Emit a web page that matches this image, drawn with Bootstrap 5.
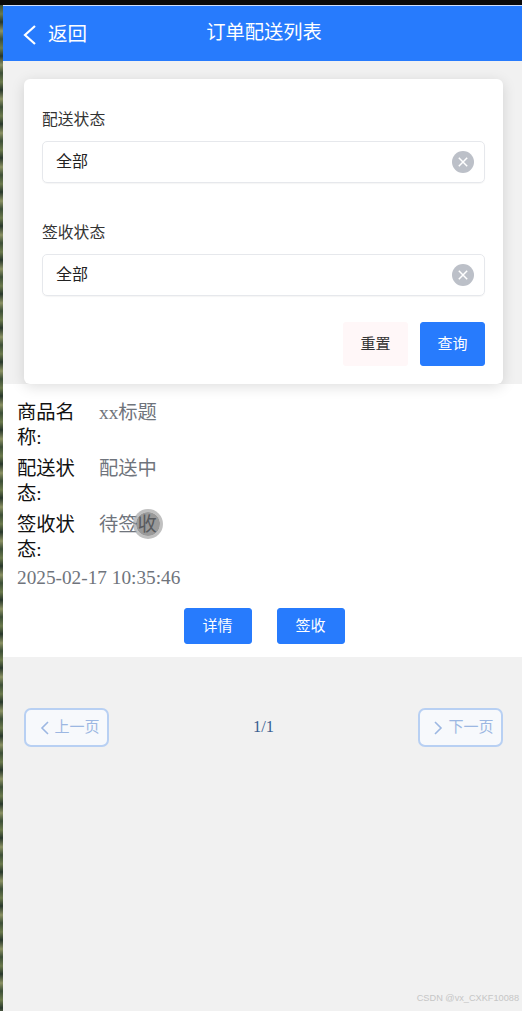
<!DOCTYPE html>
<html lang="zh-CN">
<head>
    <meta charset="UTF-8">
    <meta name="viewport" content="width=device-width, initial-scale=1.0">
    <title>订单配送列表</title>
    <link href="https://cdn.jsdelivr.net/npm/bootstrap@5.3.0/dist/css/bootstrap.min.css" rel="stylesheet">
    <style>
        html, body { height: 100%; }
        body {
            background: #f1f1f1;
            font-family: "Liberation Sans", "Noto Sans CJK SC", sans-serif;
            overflow: hidden;
        }
        .shot-frame { height: 1011px; border-top: 5px solid #0a0a0a; }
        .photo-edge {
            width: 3px;
            background: repeating-linear-gradient(180deg, #3c4f38 0, #6b7a4c 9px, #28382c 17px, #8a9163 26px, #3c4f38 34px);
        }
        .page-main { min-width: 0; background: #f1f1f1; }
        .top-bar {
            height: 56px;
            background: #277bfd;
            border-top: 1px solid #cfe0fb;
            color: #fff;
        }
        .back-link { width: 84px; padding-left: 20px; font-size: 19.5px; gap: 12px; margin-top: 3px; flex: none; }
        .bar-title { width: 186px; margin-left: 84px; font-size: 19.3px; text-align: center; flex: none; }
        .filter-box {
            margin: 18px 19px 0 21px;
            height: 305px;
            padding: 30px 18px 0 18px;
            background: #fff;
            border-radius: 6px;
            box-shadow: 0 3px 14px rgba(0, 0, 0, .13);
            position: relative;
            z-index: 2;
        }
        .field-label { font-size: 15.8px; line-height: 22px; color: #333; margin-bottom: 10px; }
        .select-box {
            height: 42px;
            border: 1px solid #e6e8ec;
            border-radius: 5px;
            padding: 0 10px 0 13px;
            font-size: 16px;
            color: #222;
            margin-bottom: 39px;
            box-shadow: 0 1px 1px rgba(0, 0, 0, .04);
        }
        .select-box.last-select { margin-bottom: 26px; }
        .clear-dot { width: 22px; height: 22px; display: block; }
        .btn-plain, .btn-blue {
            width: 65px;
            height: 44px;
            padding: 0;
            font-size: 15px;
            border-radius: 3px;
        }
        .btn-plain { background: #fff7f8; border: 0; color: #333; }
        .btn-blue { background: #277bfd; border: 1px solid #277bfd; color: #fff; }
        .btn-blue:hover { background: #277bfd; color: #fff; }
        .order-box {
            background: #fff;
            height: 273px;
            padding: 16px 14px 0 14px;
            font-family: "Liberation Serif", "Noto Sans CJK SC", serif;
            font-size: 19.3px;
            line-height: 25px;
        }
        .order-line { margin-bottom: 6px; }
        .order-key { width: 64px; margin-right: 18px; color: #111; flex: none; }
        .order-val { color: #6f747c; position: relative; }
        .order-date { color: #6f747c; margin-top: -3px; }
        .order-btns { gap: 25px; margin-top: 18px; padding-left: 3px; }
        .order-btns .btn-blue { width: 68px; height: 36px; font-size: 15px; font-family: "Liberation Sans", "Noto Sans CJK SC", sans-serif; }
        .touch-dot {
            position: absolute;
            left: 34px;
            top: -3px;
            width: 30px;
            height: 30px;
            border-radius: 50%;
            background: rgba(70, 70, 70, .55);
            background-clip: padding-box;
            border: 3px solid rgba(150, 150, 150, .6);
        }
        .pager { padding: 51px 19px 0 21px; }
        .pager-btn {
            width: 85px;
            height: 39px;
            padding-left: 6px;
            border: 2px solid #b8d0f3;
            border-radius: 7px;
            background: #f7f9fc;
            color: #9cb7e2;
            font-size: 15px;
            gap: 4px;
        }
        .pager-num { font-family: "Liberation Serif", serif; font-size: 16.5px; color: #3a5f92; }
        .mark-text {
            position: absolute;
            right: 3px;
            bottom: 5px;
            font-size: 9.2px;
            color: #c6c6c6;
        }
    </style>
</head>
<body>
    <div class="shot-frame d-flex position-relative">
        <div class="photo-edge flex-shrink-0"></div>
        <div class="page-main flex-grow-1">
            <!-- Header -->
            <div class="top-bar d-flex align-items-center">
                <div class="back-link d-flex align-items-center">
                    <svg width="13" height="20" viewBox="0 0 13 20"><path d="M12 1 2 10l10 9" fill="none" stroke="#fff" stroke-width="2.200"/></svg>
                    <span>返回</span>
                </div>
                <div class="bar-title">订单配送列表</div>
            </div>

            <!-- Filter -->
            <div class="filter-box">
                <div class="field-label">配送状态</div>
                <div class="select-box d-flex align-items-center justify-content-between">
                    <span>全部</span>
                    <svg class="clear-dot" viewBox="0 0 22 22"><circle cx="11" cy="11" r="11" fill="#bcc0c8"/><path d="M6.800 6.800l8.400 8.400M15.200 6.800l-8.400 8.400" stroke="#fff" stroke-width="1.500"/></svg>
                </div>
                <div class="field-label">签收状态</div>
                <div class="select-box last-select d-flex align-items-center justify-content-between">
                    <span>全部</span>
                    <svg class="clear-dot" viewBox="0 0 22 22"><circle cx="11" cy="11" r="11" fill="#bcc0c8"/><path d="M6.800 6.800l8.400 8.400M15.200 6.800l-8.400 8.400" stroke="#fff" stroke-width="1.500"/></svg>
                </div>
                <div class="d-flex justify-content-end gap-2">
                    <button class="btn btn-plain me-1">重置</button>
                    <button class="btn btn-blue">查询</button>
                </div>
            </div>

            <!-- Order -->
            <div class="order-box">
                <div class="order-line d-flex"><div class="order-key">商品名称:</div><div class="order-val">xx标题</div></div>
                <div class="order-line d-flex"><div class="order-key">配送状态:</div><div class="order-val">配送中</div></div>
                <div class="order-line d-flex"><div class="order-key">签收状态:</div><div class="order-val">待签收<span class="touch-dot"></span></div></div>
                <div class="order-date">2025-02-17 10:35:46</div>
                <div class="order-btns d-flex justify-content-center">
                    <button class="btn btn-blue">详情</button>
                    <button class="btn btn-blue">签收</button>
                </div>
            </div>

            <!-- Pager -->
            <div class="pager d-flex align-items-center justify-content-between">
                <div class="pager-btn d-flex align-items-center justify-content-center">
                    <svg width="11" height="16" viewBox="0 0 11 16"><path d="M9 2 3 8l6 6" fill="none" stroke="#9cb7e2" stroke-width="1.600"/></svg>
                    <span>上一页</span>
                </div>
                <div class="pager-num">1/1</div>
                <div class="pager-btn d-flex align-items-center justify-content-center">
                    <svg width="11" height="16" viewBox="0 0 11 16"><path d="M2 2l6 6-6 6" fill="none" stroke="#9cb7e2" stroke-width="1.600"/></svg>
                    <span>下一页</span>
                </div>
            </div>
        </div>
        <div class="mark-text">CSDN @vx_CXKF10088</div>
    </div>
    <script src="https://cdn.jsdelivr.net/npm/bootstrap@5.3.0/dist/js/bootstrap.bundle.min.js"></script>
</body>
</html>
